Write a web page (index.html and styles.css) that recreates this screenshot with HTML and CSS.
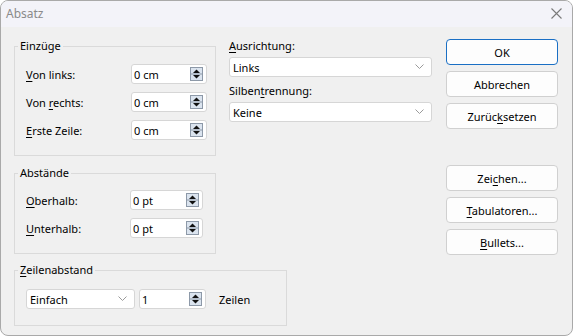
FILE: index.html
```html
<!DOCTYPE html>
<html lang="de">
<head>
    <meta charset="UTF-8">
    <title>Absatz</title>
    <link rel="stylesheet" href="styles.css">
</head>
<body>

<div class="window">
    <div class="titlebar">
        <span class="title">Absatz</span>
        <svg class="close" width="11" height="11" viewBox="0 0 11 11">
            <path d="M0.5 0.5L10.5 10.5M10.5 0.5L0.5 10.5" stroke="#7a7a7a" stroke-width="1.1"/>
        </svg>
    </div>

    <div class="main">
        <div class="left">
            <fieldset class="group group-indent">
                <legend>Einzüge</legend>
                <div class="row">
                    <label><u>V</u>on links:</label>
                    <div class="spin wide"><span>0 cm</span><svg width="13" height="14" viewBox="0 0 13 14"><rect x="0.5" y="0.5" width="12" height="13" fill="#dbe4ef" stroke="#8d99a8"/><line x1="1" y1="7" x2="12" y2="7" stroke="#8d99a8"/><path d="M3 6H10L6.5 2.5Z" fill="#111"/><path d="M3 8H10L6.5 11.5Z" fill="#111"/></svg></div>
                </div>
                <div class="row">
                    <label>Von <u>r</u>echts:</label>
                    <div class="spin wide"><span>0 cm</span><svg width="13" height="14" viewBox="0 0 13 14"><rect x="0.5" y="0.5" width="12" height="13" fill="#dbe4ef" stroke="#8d99a8"/><line x1="1" y1="7" x2="12" y2="7" stroke="#8d99a8"/><path d="M3 6H10L6.5 2.5Z" fill="#111"/><path d="M3 8H10L6.5 11.5Z" fill="#111"/></svg></div>
                </div>
                <div class="row">
                    <label><u>E</u>rste Zeile:</label>
                    <div class="spin wide"><span>0 cm</span><svg width="13" height="14" viewBox="0 0 13 14"><rect x="0.5" y="0.5" width="12" height="13" fill="#dbe4ef" stroke="#8d99a8"/><line x1="1" y1="7" x2="12" y2="7" stroke="#8d99a8"/><path d="M3 6H10L6.5 2.5Z" fill="#111"/><path d="M3 8H10L6.5 11.5Z" fill="#111"/></svg></div>
                </div>
            </fieldset>

            <fieldset class="group group-space">
                <legend>Abstände</legend>
                <div class="row">
                    <label><u>O</u>berhalb:</label>
                    <div class="spin"><span>0 pt</span><svg width="13" height="14" viewBox="0 0 13 14"><rect x="0.5" y="0.5" width="12" height="13" fill="#dbe4ef" stroke="#8d99a8"/><line x1="1" y1="7" x2="12" y2="7" stroke="#8d99a8"/><path d="M3 6H10L6.5 2.5Z" fill="#111"/><path d="M3 8H10L6.5 11.5Z" fill="#111"/></svg></div>
                </div>
                <div class="row">
                    <label><u>U</u>nterhalb:</label>
                    <div class="spin"><span>0 pt</span><svg width="13" height="14" viewBox="0 0 13 14"><rect x="0.5" y="0.5" width="12" height="13" fill="#dbe4ef" stroke="#8d99a8"/><line x1="1" y1="7" x2="12" y2="7" stroke="#8d99a8"/><path d="M3 6H10L6.5 2.5Z" fill="#111"/><path d="M3 8H10L6.5 11.5Z" fill="#111"/></svg></div>
                </div>
            </fieldset>
        </div>

        <div class="middle">
            <label class="field-label"><u>A</u>usrichtung:</label>
            <div class="select"><span>Links</span><svg width="9" height="6" viewBox="0 0 9 6"><path d="M0.5 0.5L4.5 4.5L8.5 0.5" fill="none" stroke="#9a9a9a"/></svg></div>
            <label class="field-label">Silben<u>t</u>rennung:</label>
            <div class="select"><span>Keine</span><svg width="9" height="6" viewBox="0 0 9 6"><path d="M0.5 0.5L4.5 4.5L8.5 0.5" fill="none" stroke="#9a9a9a"/></svg></div>
        </div>

        <div class="buttons">
            <button class="btn btn-default">OK</button>
            <button class="btn">Abbrechen</button>
            <button class="btn">Zurüc<u>k</u>setzen</button>
            <button class="btn btn-gap">Zei<u>c</u>hen...</button>
            <button class="btn"><u>T</u>abulatoren...</button>
            <button class="btn"><u>B</u>ullets...</button>
        </div>

        <fieldset class="group group-line">
            <legend><u>Z</u>eilenabstand</legend>
            <div class="line-row">
                <div class="select select-small"><span>Einfach</span><svg width="9" height="6" viewBox="0 0 9 6"><path d="M0.5 0.5L4.5 4.5L8.5 0.5" fill="none" stroke="#9a9a9a"/></svg></div>
                <div class="spin spin-line"><span>1</span><svg width="13" height="14" viewBox="0 0 13 14"><rect x="0.5" y="0.5" width="12" height="13" fill="#dbe4ef" stroke="#8d99a8"/><line x1="1" y1="7" x2="12" y2="7" stroke="#8d99a8"/><path d="M3 6H10L6.5 2.5Z" fill="#111"/><path d="M3 8H10L6.5 11.5Z" fill="#111"/></svg></div>
                <span class="unit">Zeilen</span>
            </div>
        </fieldset>
    </div>
</div>

</body>
</html>
```

FILE: styles.css
```css
* {
    box-sizing: border-box;
}
body {
    margin: 0;
    background-color: #fff;
    font-family: "Noto Sans", sans-serif;
    font-size: 11px;
    color: #000;
}
u {
    text-decoration-thickness: 1px;
    text-underline-offset: 2px;
}
.window {
    width: 573px;
    height: 336px;
    border: 1px solid #a9a9a9;
    border-radius: 8px;
    overflow: hidden;
    background-color: #f0f0f0;
}
.titlebar {
    height: 26px;
    background-color: #f3f3f9;
    display: flex;
    align-items: center;
    justify-content: space-between;
    padding: 0 10px 1px 5px;
}
.title {
    color: #8a8a8a;
    font-size: 12px;
}
.main {
    display: grid;
    grid-template-columns: 202px 203px 113px;
    column-gap: 13px;
    padding: 11px 0 0 13px;
}
.left {
    display: flex;
    flex-direction: column;
}
.group {
    margin: 0;
    border: 1px solid #dadada;
    padding: 10px 8px 15px 11px;
    min-width: 0;
}
.group legend {
    padding: 0 2px;
    margin-left: -8px;
    line-height: 16px;
}
.group-space {
    margin-top: 9px;
    padding-top: 9px;
    padding-bottom: 15px;
}
.row {
    display: flex;
    align-items: center;
    justify-content: space-between;
    height: 20px;
}
.row + .row {
    margin-top: 8px;
}
.spin {
    width: 73px;
    height: 20px;
    background-color: #fff;
    border: 1px solid #d6d6d6;
    border-radius: 3px;
    display: flex;
    align-items: center;
    justify-content: space-between;
    padding: 0 3px 0 2px;
    margin-right: 4px;
}
.spin.wide {
    width: 76px;
    margin-right: 0;
}
.middle {
    display: flex;
    flex-direction: column;
}
.field-label {
    line-height: 16px;
}
.select {
    height: 20px;
    background-color: #fff;
    border: 1px solid #d6d6d6;
    border-radius: 3px;
    display: flex;
    align-items: center;
    justify-content: space-between;
    padding: 0 7px 0 3px;
    margin: 3px 0 6px;
}
.buttons {
    display: flex;
    flex-direction: column;
    gap: 6px;
    padding-top: 1px;
    margin-left: 1px;
}
.btn {
    height: 26px;
    font-family: inherit;
    font-size: 11px;
    color: #000;
    background-color: #fdfdfd;
    border: 1px solid #d0d0d0;
    border-radius: 4px;
    padding: 0;
}
.btn-default {
    border-color: #1a6fc4;
}
.btn-gap {
    margin-top: 30px;
}
.group-line {
    grid-column: 1 / 3;
    width: 273px;
    margin-top: 7px;
    padding: 11px 8px 16px 11px;
}
.line-row {
    display: flex;
    align-items: center;
}
.select-small {
    width: 109px;
    margin: 0;
}
.spin-line {
    width: 67px;
    margin: 0 0 0 4px;
}
.unit {
    margin-left: 13px;
}
```
